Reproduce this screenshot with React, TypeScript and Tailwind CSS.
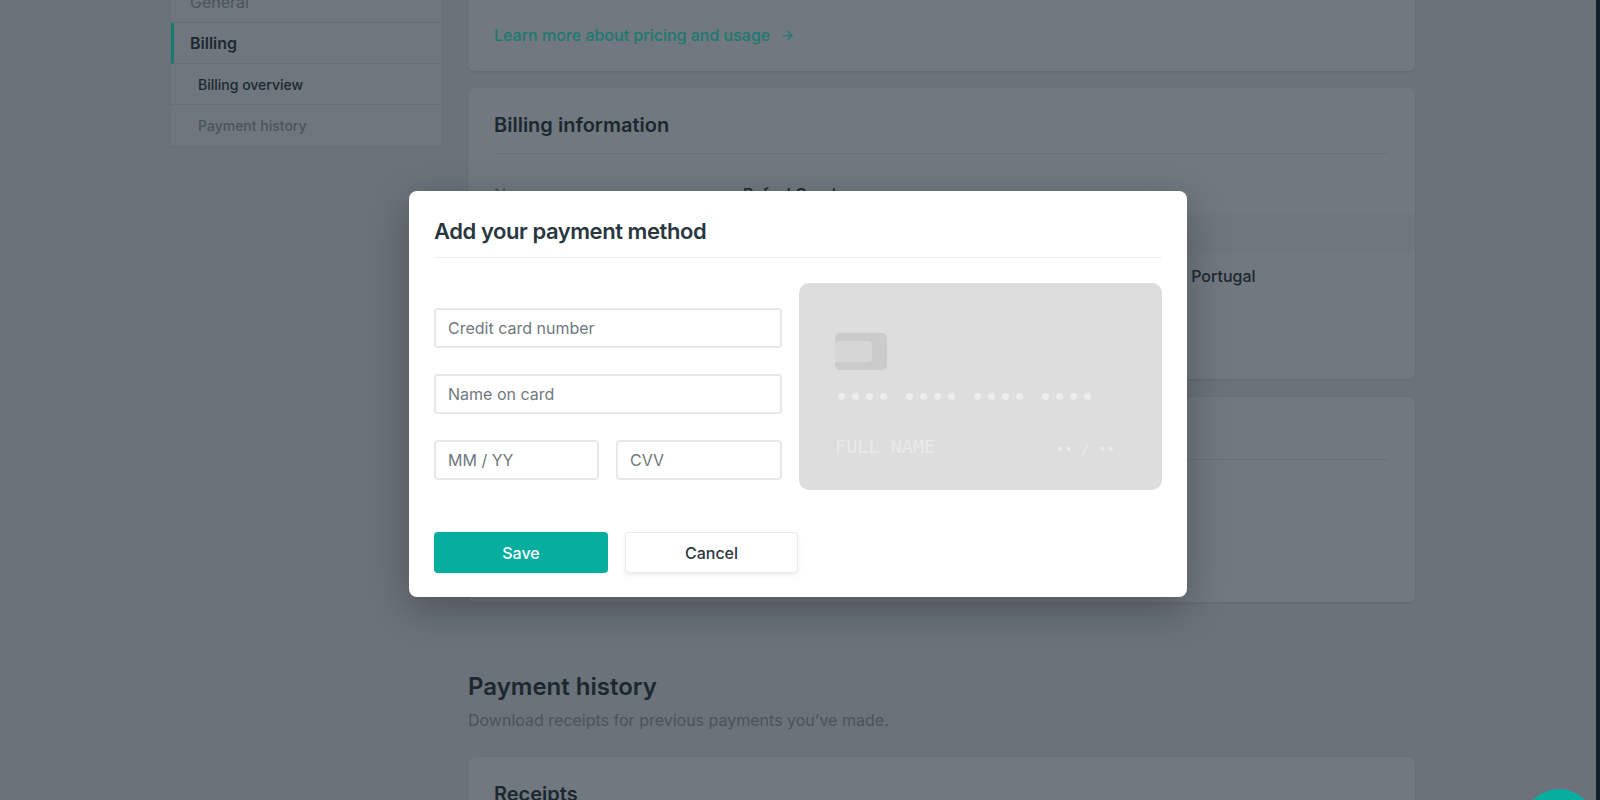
import { ArrowRight } from "lucide-react";

function Sidebar() {
  return (
    <aside className="-mt-[18px] w-[273px] self-start border-x border-b border-[#686f76] bg-[#6f767d]">
      <div className="flex h-[41px] items-center border-b border-[#686f76] pl-[19px] text-[16px] text-[#4a545b]">
        General
      </div>
      <div className="flex h-[41px] items-center border-b border-l-[3px] border-b-[#686f76] border-l-[#177b71] pl-[16px] text-[16px] font-semibold text-[#1c2830]">
        Billing
      </div>
      <div className="flex h-[41px] items-center border-b border-[#686f76] pl-[27px] text-[14px] font-medium text-[#1c2830]">
        Billing overview
      </div>
      <div className="flex h-[41px] items-center pl-[27px] text-[14px] font-medium text-[#4a545b]">
        Payment history
      </div>
    </aside>
  );
}

function InfoRow({
  label,
  value,
  striped,
  className,
}: {
  label: string;
  value: string;
  striped?: boolean;
  className?: string;
}) {
  return (
    <div
      className={`-mx-[26px] flex px-[26px] text-[16px] ${striped ? "bg-[#6f767d]" : ""} ${className ?? "h-[40px] items-center"}`}
    >
      <div className="w-[249px] shrink-0 text-[#4a545b]">{label}</div>
      <div className="whitespace-nowrap font-medium text-[#1c2830]">{value}</div>
    </div>
  );
}

function Main() {
  return (
    <main className="-mt-[49px] ml-[25px] flex w-[947px] flex-col">
      {/* Plan card (scrolled out) */}
      <section className="rounded-[6px] bg-[#71787f] px-[26px] pb-[24px] pt-[26px] shadow-[0_1px_3px_rgba(0,0,0,0.08)]">
        <p className="text-[16px] leading-[26px] text-[#4a545b]">
          Charges are billed monthly, according to usage.
        </p>
        <a className="mt-[20px] flex items-center gap-[10px] text-[16px] font-medium leading-[24px] text-[#1c7a71]">
          Learn more about pricing and usage
          <ArrowRight className="h-[15px] w-[15px]" strokeWidth={2} />
        </a>
      </section>

      {/* Billing information */}
      <section className="mt-[17px] rounded-[6px] bg-[#71787f] px-[26px] pb-[41px] shadow-[0_1px_3px_rgba(0,0,0,0.08)]">
        <div className="border-b border-[#686f76] pb-[14px] pt-[23px]">
          <h3 className="text-[20px] font-semibold leading-[28px] text-[#1c2830]">
            Billing information
          </h3>
        </div>
        <div className="mt-[20px]">
          <InfoRow label="Name:" value="Rafael Conde" />
          <InfoRow label="Email:" value="rafael@conde.pt" striped />
          <InfoRow
            label="Address:"
            value="Praça dos Fanqueiros 123, 2.º Esquerdo, 1100-053 Lisboa, Portugal"
            className="items-start pb-[10px] pt-[10px] leading-[24px]"
          />
          <InfoRow label="VAT number:" value="PT 123 456 789" />
        </div>
      </section>

      {/* Payment method */}
      <section className="mt-[18px] rounded-[6px] bg-[#71787f] px-[26px] shadow-[0_1px_3px_rgba(0,0,0,0.08)]">
        <div className="border-b border-[#686f76] pb-[16px] pt-[18px]">
          <h3 className="text-[20px] font-semibold leading-[28px] text-[#1c2830]">
            Payment method
          </h3>
        </div>
        <div className="py-[31px]">
          <p className="text-[16px] leading-[24px] text-[#4a545b]">
            You haven't added a payment method yet.
          </p>
          <button className="mt-[16px] h-[40px] rounded-[4px] px-[20px] text-[16px] font-medium text-[#1c2830]">
            Add payment method
          </button>
        </div>
      </section>

      <h2 className="mt-[69px] text-[24px] font-semibold leading-[32px] text-[#1c2830]">
        Payment history
      </h2>
      <p className="mt-[5px] text-[16px] leading-[24px] text-[#4a545b]">
        Download receipts for previous payments you’ve made.
      </p>

      <section className="mt-[25px] rounded-[6px] bg-[#71787f] px-[26px] pb-[40px] pt-[23px] shadow-[0_1px_3px_rgba(0,0,0,0.08)]">
        <h3 className="text-[20px] font-semibold leading-[28px] text-[#1c2830]">Receipts</h3>
      </section>
    </main>
  );
}

function Dots({ count, className }: { count: number; className: string }) {
  return (
    <div className="flex gap-[7px]">
      {Array.from({ length: count }).map((_, i) => (
        <span key={i} className={`rounded-full bg-[#ececec] ${className}`} />
      ))}
    </div>
  );
}

function CardPreview() {
  return (
    <div className="flex h-[207px] w-[363px] flex-col rounded-[10px] bg-[#dddddd] pl-[36px] pr-[47px] pt-[50px]">
      <div className="relative h-[37px] w-[52px] rounded-[5px] bg-[#cbcbcb]">
        <div className="absolute left-0 top-[8px] h-[21px] w-[37px] rounded-r-[4px] bg-[#d6d6d6]" />
      </div>
      <div className="mt-[23px] flex gap-[19px] pl-[3px]">
        <Dots count={4} className="h-[7px] w-[7px]" />
        <Dots count={4} className="h-[7px] w-[7px]" />
        <Dots count={4} className="h-[7px] w-[7px]" />
        <Dots count={4} className="h-[7px] w-[7px]" />
      </div>
      <div className="mt-[35px] flex items-center justify-between font-['DejaVu_Sans_Mono',monospace] text-[#eaeaea]">
        <span className="text-[18.5px] leading-[24px]">FULL NAME</span>
        <span className="mt-[4px] text-[14px] leading-[20px]">•• / ••</span>
      </div>
    </div>
  );
}

function PaymentModal() {
  const inputClass =
    "h-[40px] rounded-[4px] border-2 border-[#e6e8e9] bg-white px-[12px] text-[16px] text-[#2a373f] placeholder:text-[#6f787d] focus:outline-none";
  return (
    <div className="h-fit w-[778px] rounded-[8px] bg-white px-[25px] pb-[24px] pt-[24px] shadow-[0_12px_40px_rgba(0,0,0,0.28)]">
      <h2 className="border-b border-[#eef0f1] pb-[10px] text-[22px] font-semibold leading-[32px] tracking-[-0.02em] text-[#2a373f]">
        Add your payment method
      </h2>

      <div className="mt-[25px] flex items-start gap-[17px]">
        <div className="flex w-[348px] flex-col gap-[26px] pt-[25px]">
          <input className={inputClass} placeholder="Credit card number" />
          <input className={inputClass} placeholder="Name on card" />
          <div className="flex gap-[17px]">
            <input className={`${inputClass} w-[165px]`} placeholder="MM / YY" />
            <input className={`${inputClass} w-[166px]`} placeholder="CVV" />
          </div>
        </div>
        <CardPreview />
      </div>

      <div className="mt-[42px] flex gap-[17px]">
        <button className="h-[41px] w-[174px] rounded-[4px] bg-[#05ae9f] text-[16px] font-medium text-white">
          Save
        </button>
        <button className="h-[41px] w-[173px] rounded-[4px] border border-[#e9ebec] bg-white text-[16px] font-medium text-[#2a373f] shadow-[0_2px_4px_rgba(0,0,0,0.08)]">
          Cancel
        </button>
      </div>
    </div>
  );
}

export default function App() {
  return (
    <div className="relative h-[800px] w-[1600px] overflow-hidden bg-[#6b7279] font-['Inter',sans-serif]">
      <div className="flex pl-[170px]">
        <Sidebar />
        <Main />
      </div>

      {/* modal layer */}
      <div className="absolute inset-y-0 left-0 right-[4px] flex justify-center pt-[191px]">
        <PaymentModal />
      </div>

      <div className="absolute right-0 top-0 h-full w-[4px] bg-[#12222a]" />
      <button className="absolute left-[1523px] top-[789px] h-[72px] w-[72px] rounded-full bg-[#05ae9f]" />
    </div>
  );
}
